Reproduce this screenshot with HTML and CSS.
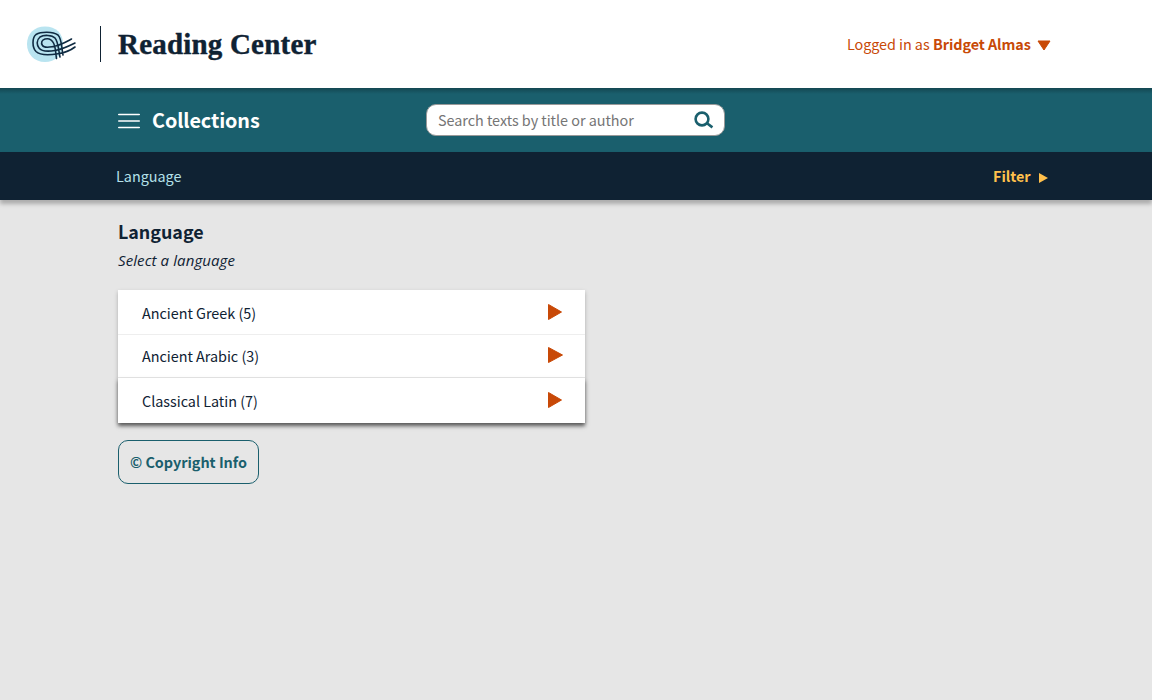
FILE: index.html
```html
<!DOCTYPE html>
<html lang="en">
<head>
<meta charset="utf-8">
<title>Reading Center</title>
<link rel="stylesheet" href="styles.css">
</head>
<body>
<header class="header">
  <svg class="logo" width="52" height="40" viewBox="0 0 52 40">
    <path class="logo-bg" d="M21 2.500C10 2.500 3 10 3 20s7 18 18 18c10 0 18-7 18-18S32 2.500 21 2.500Z"/>
    <g class="logo-lines">
      <path d="M51 23C45 27.500 40 29 34 29.800C26 31 16 31.500 12 27.500C8 23 8 14 12 10.500C17 7.500 29 7.500 34 11C38 15 37.500 24 39 31"/>
      <path d="M51 19C43 23 38 25.500 31 26.500C25 27.500 18 28 15 24C12.500 21 12.500 16 16 13C20 10.500 28 11 31 14C34.500 18 34.500 27 36 33"/>
      <path d="M47.500 15C40 19 36 21.500 28 22.800C24 23.500 20 24 18.500 21.500C16.500 18.500 18 16 21 15C25 14 28 16 29.500 19C32 24 31.500 29 32.500 34.500"/>
    </g>
  </svg>
  <span class="divider"></span>
  <h1 class="title">Reading Center</h1>
  <div class="user"><span class="user-label">Logged in as</span><b class="user-name">Bridget Almas</b>
    <svg class="user-arrow" width="14" height="12" viewBox="0 0 14 12"><path d="M1 1H13L7 10Z"/></svg>
  </div>
</header>
<nav class="nav">
  <svg class="menu" width="22" height="16" viewBox="0 0 22 16"><path d="M0.700 1.500H21.300M0.700 8H21.300M0.700 14.500H21.300"/></svg>
  <span class="nav-title">Collections</span>
  <div class="search"><span class="search-text">Search texts by title or author</span>
    <svg class="search-icon" width="20" height="18" viewBox="0 0 20 18"><circle cx="8" cy="8" r="6.400"/><path d="M12.700 12L18.400 16.400"/></svg>
  </div>
</nav>
<div class="crumbs">
  <span class="crumb">Language</span>
  <span class="filter">Filter</span>
  <svg class="filter-arrow" width="10" height="10" viewBox="0 0 10 10"><path d="M0 0L9 5L0 10Z"/></svg>
</div>
<main class="main">
  <h2 class="heading"><span class="heading-text">Language</span></h2>
  <p class="hint"><span class="hint-text">Select a language</span></p>
  <ul class="list">
    <li class="item item-first"><span class="item-text">Ancient Greek (5)</span><svg class="arrow" width="16" height="16" viewBox="0 0 16 16"><path d="M1.500 0.500L14.500 8L1.500 15.500Z"/></svg></li>
    <li class="item item-middle"><span class="item-text">Ancient Arabic (3)</span><svg class="arrow" width="16" height="16" viewBox="0 0 16 16"><path d="M1.500 0.500L15.500 8L1.500 15.500Z"/></svg></li>
    <li class="item item-last"><span class="item-text">Classical Latin (7)</span><svg class="arrow" width="16" height="16" viewBox="0 0 16 16"><path d="M1.500 0.500L14.500 8L1.500 15.500Z"/></svg></li>
  </ul>
  <div class="copyright"><span class="copyright-text">© Copyright Info</span></div>
</main>
</body>
</html>
```
FILE: styles.css
```css
* { box-sizing: border-box; }
body { margin: 0; min-height: 700px; background: #e6e6e6; color: #0f2233; font: 14.4px/24px "Noto Sans CJK SC", "Noto Sans CJK JP", sans-serif; letter-spacing: -0.02px; white-space: nowrap; }
svg { display: block; flex: none; }
.header { height: 88px; background: #fff; display: flex; align-items: center; padding-left: 24px; }
.logo-bg { fill: #b9e4f0; }
.logo-lines { fill: none; stroke: #102b42; stroke-width: 1.6; stroke-linecap: round; }
.divider { width: 1px; height: 36px; background: #0f2233; margin-left: 24px; }
.title { margin: 0 0 0 17px; width: 500px; font: bold 29px/40px "Liberation Serif", serif; letter-spacing: 0.2px; -webkit-text-stroke: 0.4px #0f2233; }
.user { margin-left: 229px; display: flex; color: #c84907; align-items: center; }
.user-label { width: 86px; letter-spacing: -0.06px; }
.user-name { width: 104px; letter-spacing: -0.08px; }
.user-arrow { margin-top: 3px; }
.user-arrow path, .arrow path { fill: #c84907; stroke: #c84907; stroke-width: 1; stroke-linejoin: round; }
.nav { height: 64px; display: flex; align-items: center; padding: 0 0 0 118px; background: linear-gradient(rgba(0,0,0,.25), transparent 6px), #1a5f6d; }
.menu path { stroke: #fff; stroke-width: 1.5; stroke-linecap: round; fill: none; }
.menu { margin-top: 2px; }
.nav-title { margin-left: 12px; width: 274px; color: #fff; font-weight: bold; font-size: 19.8px; letter-spacing: -0.1px; }
.search { width: 299px; height: 32px; border: 1px solid #999; border-radius: 10px; background: #fff; display: flex; align-items: center; padding-left: 11px; color: #757575; }
.search-text { width: 256px; letter-spacing: -0.03px; }
.search-icon { fill: none; stroke: #1a5f6d; stroke-width: 2.6; }
.crumbs { height: 48px; background: #0f2233; box-shadow: 0 4px 4px rgba(0,0,0,.25); display: flex; align-items: center; padding-left: 116px; color: #b4e1ea; }
.crumb { width: 877px; }
.filter { width: 46px; color: #ffc04c; font-weight: bold; }
.filter-arrow { fill: #ffc04c; margin-top: 3px; }
.main { padding: 18px 0 0 118px; }
.heading { margin: 0; font-size: 17.9px; line-height: 26px; }
.hint { margin: 4px 0 18px; font: italic 15px/24px "Open Sans", sans-serif; letter-spacing: 0.1px; }
.list { list-style: none; margin: 0; padding: 0; width: 467px; box-shadow: 0 2px 4px rgba(0,0,0,.25); }
.item { display: flex; align-items: center; justify-content: space-between; padding: 0 22px 0 24px; background: #fff; border-bottom: 1px solid #e6e6e6; }
.item-first { height: 45px; border-bottom-color: #eee; }
.item-first .item-text { padding-top: 2px; }
.item-middle { height: 43px; }
.item-middle .arrow { margin-bottom: 2px; }
.item-last { height: 45px; border: 0; box-shadow: 0 3px 4px rgba(0,0,0,.5); }
.item-last .arrow { margin-bottom: 1px; }
.copyright { margin-top: 17px; width: 141px; height: 44px; border: 1px solid #1a5f6d; border-radius: 10px; color: #1a5f6d; font-weight: bold; padding: 9px 11px; }
```
